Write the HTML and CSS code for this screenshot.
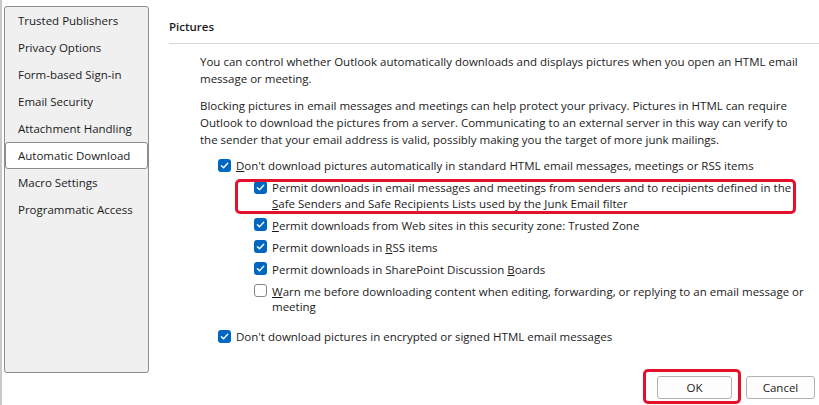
FILE: index.html
```html
<!DOCTYPE html>
<html lang="en">
<head>
<meta charset="utf-8">
<title>Trust Center</title>
<link rel="stylesheet" href="styles.css">
</head>
<body>
<div class="window">
  <nav class="sidebar">
    <div class="nav-item">Trusted Publishers</div>
    <div class="nav-item">Privacy Options</div>
    <div class="nav-item">Form-based Sign-in</div>
    <div class="nav-item">Email Security</div>
    <div class="nav-item">Attachment Handling</div>
    <div class="nav-item selected">Automatic Download</div>
    <div class="nav-item">Macro Settings</div>
    <div class="nav-item">Programmatic Access</div>
  </nav>

  <main class="content">
    <h2 class="section-title">Pictures</h2>
    <div class="section-body">
      <p class="para">You can control whether Outlook automatically downloads and displays pictures when you open an HTML email message or meeting.</p>
      <p class="para">Blocking pictures in email messages and meetings can help protect your privacy. Pictures in HTML can require Outlook to download the pictures from a server. Communicating to an external server in this way can verify to the sender that your email address is valid, possibly making you the target of more junk mailings.</p>

      <div class="options">
        <label class="check">
          <span class="box on"><svg viewBox="0 0 13 13"><path d="M3.4 6.7 L5.5 8.7 L9.7 4.3"/></svg></span>
          <span class="text"><u>D</u>on't download pictures automatically in standard HTML email messages, meetings or RSS items</span>
        </label>

        <div class="sub-options">
          <label class="check flagged">
            <span class="box on"><svg viewBox="0 0 13 13"><path d="M3.4 6.7 L5.5 8.7 L9.7 4.3"/></svg></span>
            <span class="text">Permit downloads in email messages and meetings from senders and to recipients defined in the <u>S</u>afe Senders and Safe Recipients Lists used by the Junk Email filter</span>
          </label>
          <label class="check">
            <span class="box on"><svg viewBox="0 0 13 13"><path d="M3.4 6.7 L5.5 8.7 L9.7 4.3"/></svg></span>
            <span class="text"><u>P</u>ermit downloads from Web sites in this security zone: Trusted Zone</span>
          </label>
          <label class="check">
            <span class="box on"><svg viewBox="0 0 13 13"><path d="M3.4 6.7 L5.5 8.7 L9.7 4.3"/></svg></span>
            <span class="text">Permit downloads in <u>R</u>SS items</span>
          </label>
          <label class="check">
            <span class="box on"><svg viewBox="0 0 13 13"><path d="M3.4 6.7 L5.5 8.7 L9.7 4.3"/></svg></span>
            <span class="text">Permit downloads in SharePoint Discussion <u>B</u>oards</span>
          </label>
          <label class="check">
            <span class="box"></span>
            <span class="text"><u>W</u>arn me before downloading content when editing, forwarding, or replying to an email message or meeting</span>
          </label>
        </div>

        <label class="check last">
          <span class="box on"><svg viewBox="0 0 13 13"><path d="M3.4 6.7 L5.5 8.7 L9.7 4.3"/></svg></span>
          <span class="text">Don't download pictures in encrypted or signed HTML email messages</span>
        </label>
      </div>
    </div>

    <div class="buttons">
      <button class="btn flagged-btn">OK</button>
      <button class="btn cancel">Cancel</button>
    </div>
  </main>
</div>
</body>
</html>
```

FILE: styles.css
```css
* {
  box-sizing: border-box;
}

html, body {
  margin: 0;
  padding: 0;
}

body {
  width: 819px;
  height: 405px;
  overflow: hidden;
  background: #ffffff;
  font-family: "Open Sans", "Noto Sans", sans-serif;
  font-size: 11.5px;
  color: #1b1b1b;
}

.window {
  display: flex;
  height: 405px;
  border-left: 2px solid #c9c9c9;
}

/* category list on the left */
.sidebar {
  margin: 6px 0 0 2px;
  width: 145px;
  height: 367px;
  flex: none;
  background: #f0f0f0;
  border: 1px solid #8d8d8d;
  border-radius: 3px;
}

.nav-item {
  height: 27px;
  line-height: 27px;
  padding-left: 13px;
  white-space: nowrap;
}

.nav-item.selected {
  background: #ffffff;
  border: 1px solid #8d8d8d;
  border-radius: 3px;
  line-height: 25px;
  padding-left: 12px;
}

/* right-hand settings page */
.content {
  flex: 1;
  display: flex;
  flex-direction: column;
  margin-left: 20px;
  height: 405px;
}

.section-title {
  margin: 0;
  padding: 19px 0 8px;
  font-size: 11.5px;
  line-height: 16px;
  font-weight: 600;
  border-bottom: 1px solid #d6d6d6;
}

.section-body {
  padding: 0 14px 0 31px;
}

.para {
  margin: 9px 0 10px;
  line-height: 17px;
}

.options {
  margin-top: 6px;
}

.check {
  display: flex;
  align-items: flex-start;
  gap: 5px;
  line-height: 15.5px;
  margin-left: 18px;
}

.sub-options {
  margin-left: 54px;
}

.sub-options .check {
  margin-left: 0;
  margin-top: 6.5px;
}

.check.last {
  margin-top: 14.5px;
}

.text u {
  text-decoration-thickness: 1px;
  text-underline-offset: 1px;
}

.box {
  flex: none;
  width: 13px;
  height: 13px;
  margin-top: 0.5px;
  border: 1px solid #878787;
  border-radius: 3px;
  background: #ffffff;
  display: flex;
}

.box.on {
  border: none;
  background: #0067c0;
}

.box svg {
  width: 13px;
  height: 13px;
}

.box svg path {
  fill: none;
  stroke: #ffffff;
  stroke-width: 1.4;
  stroke-linecap: round;
  stroke-linejoin: round;
}

/* red call-out frames */
.flagged {
  position: relative;
}

.flagged::after {
  content: "";
  position: absolute;
  left: -19px;
  right: 9px;
  top: -1.5px;
  bottom: -3px;
  border: 3px solid #e3112b;
  border-radius: 5px;
  pointer-events: none;
}

.buttons {
  margin-top: auto;
  display: flex;
  justify-content: flex-end;
  gap: 14px;
  padding: 0 4px 6px 0;
}

.btn {
  height: 23px;
  width: 75px;
  padding: 0;
  font-family: inherit;
  font-size: 11.5px;
  color: #1b1b1b;
  background: #fdfdfd;
  border: 1px solid #b3b3b3;
  border-radius: 3px;
}

.btn.cancel {
  width: 69px;
}

.flagged-btn {
  position: relative;
}

.flagged-btn::after {
  content: "";
  position: absolute;
  left: -15px;
  right: -10px;
  top: -8px;
  bottom: -6px;
  border: 3px solid #e3112b;
  border-radius: 5px;
}
```
